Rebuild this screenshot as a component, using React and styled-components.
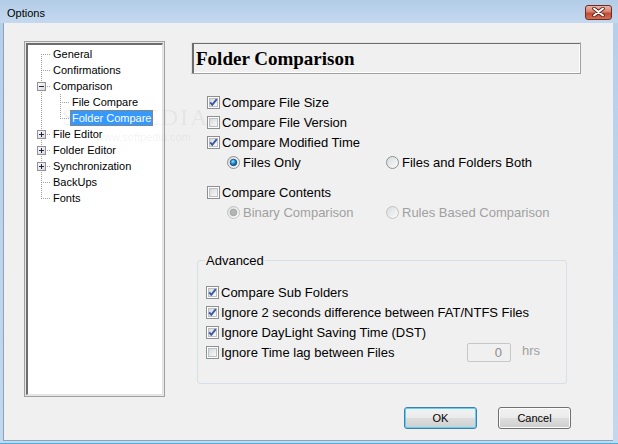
import React from "react";
import styled, { createGlobalStyle } from "styled-components";

// Win7 "Options" dialog
// ------ #f0f0f0 dialog face
// ------ #b9d1ea title bar
// ------ #3399ff selection

const GlobalStyle = createGlobalStyle`
  html, body { margin: 0; padding: 0; background: #f0f0f0; }
  body { font-family: "Liberation Sans", Arial, sans-serif; }
`;

const Window = styled.div`
  position: relative;
  width: 618px;
  height: 444px;
  display: flex;
  flex-direction: column;
  background: linear-gradient(180deg, #b6cfe9 0%, #c3d8ee 100%);
  box-sizing: border-box;
  border-bottom: 1px solid #3fb4de;
  overflow: hidden;
`;

const TitleBar = styled.div`
  height: 23px;
  flex: 0 0 23px;
  display: flex;
  align-items: center;
  justify-content: space-between;
  padding: 0 6px 0 7px;
  background: linear-gradient(180deg, #b3cce7 0%, #bdd4ec 60%, #c4d9ef 100%);
`;

const Title = styled.span`
  font-size: 11px;
  color: #000;
  margin-top: 2px;
`;

const CloseButton = styled.div`
  width: 27px;
  height: 15px;
  margin-top: 1px;
  box-sizing: border-box;
  border: 1px solid #6e2b1f;
  border-radius: 3px;
  background: linear-gradient(180deg, #eab4a8 0%, #d9826f 45%, #c24a33 55%, #d0705a 100%);
  display: flex;
  align-items: center;
  justify-content: center;
`;

const Client = styled.div`
  flex: 1;
  margin: 0 5px 2px 3px;
  background: #f0f0f0;
  border-left: 1px solid #8aa3bf;
  border-bottom: 1px solid #8aa3bf;
  padding: 18px 42px 0 20px;
  display: flex;
  flex-direction: column;
`;

const Main = styled.div`
  display: flex;
  gap: 26px;
`;

const TreeFrame = styled.div`
  flex: 0 0 141px;
  height: 356px;
  box-sizing: border-box;
  border: 1px solid #a0a0a0;
  background: #e8e8e8;
  padding: 1px;
  display: flex;
`;

const TreeView = styled.div`
  flex: 1;
  background: #fff;
  border-top: 2px solid #6d6d6d;
  border-left: 2px solid #6d6d6d;
  border-right: 1px solid #e3e3e3;
  border-bottom: 1px solid #e3e3e3;
  padding: 1px 0 0 4px;
  font-size: 11px;
  color: #000;
`;

const TreeRow = styled.div`
  display: flex;
  height: 16px;
  align-items: center;
`;

const TreeLabel = styled.span`
  height: 16px;
  line-height: 16px;
  padding: 0 2px;
  white-space: nowrap;
  box-sizing: border-box;
  background: ${(p) => (p.$selected ? "#3399ff" : "transparent")};
  color: ${(p) => (p.$selected ? "#fff" : "#000")};
  outline: ${(p) => (p.$selected ? "1px dotted #c4741c" : "none")};
  outline-offset: -1px;
`;

const Pane = styled.div`
  flex: 0 0 390px;
  display: flex;
  flex-direction: column;
`;

const Heading = styled.div`
  margin-top: 1px;
  height: 32px;
  box-sizing: border-box;
  border: 1px solid;
  border-color: #e3e3e3 #a0a0a0 #a0a0a0 #e3e3e3;
  box-shadow: inset 2px 1px 0 #6d6d6d, inset -1px -1px 0 #fff;
  display: flex;
  align-items: center;
  padding: 1px 0 0 4px;
  font-family: "Liberation Serif", "Times New Roman", serif;
  font-weight: bold;
  font-size: 19px;
  color: #000;
`;

const OptionList = styled.div`
  margin-top: 18px;
  display: flex;
  flex-direction: column;
`;

const Row = styled.div`
  height: 20px;
  display: flex;
  align-items: center;
  padding-left: ${(p) => p.$indent || 0}px;
  margin-top: ${(p) => p.$gapTop || 0}px;
  font-size: 13px;
  color: #000;
`;

const Choice = styled.label`
  display: flex;
  align-items: center;
  gap: ${(p) => p.$gap ?? 2}px;
  width: ${(p) => (p.$width ? `${p.$width}px` : "auto")};
  flex: 0 0 auto;
  white-space: nowrap;
  color: ${(p) => (p.$disabled ? "#a0a0a0" : "#000")};
`;

const GroupBox = styled.fieldset`
  margin: 31px 0 0 6px;
  width: 370px;
  box-sizing: border-box;
  border: 1px solid #d5dfe5;
  border-radius: 3px;
  padding: 14px 0 21px 8px;
  min-inline-size: 0;
`;

const Legend = styled.legend`
  font-size: 13px;
  line-height: 15px;
  padding: 0 1px;
  margin-left: -1px;
  color: #000;
`;

const NumberField = styled.div`
  width: 44px;
  height: 19px;
  box-sizing: border-box;
  border: 1px solid #c5c8cb;
  border-radius: 2px;
  background: #f0f0f0;
  font-size: 13px;
  color: #8c8c8c;
  text-align: right;
  padding-right: 8px;
  line-height: 17px;
`;

const Unit = styled.span`
  margin-left: 11px;
  margin-top: -4px;
  font-size: 13px;
  color: #a0a0a0;
`;

const Footer = styled.div`
  margin-top: 10px;
  display: flex;
  justify-content: flex-end;
  gap: 21px;
`;

const Button = styled.button`
  width: 73px;
  height: 22px;
  box-sizing: border-box;
  border: 1px solid ${(p) => (p.$default ? "#3c7fb1" : "#707070")};
  border-radius: 3px;
  background: linear-gradient(180deg, #f2f2f2 0%, #ebebeb 48%, #dddddd 52%, #cfcfcf 100%);
  box-shadow: inset 0 0 0 1px ${(p) => (p.$default ? "#5fd1f5" : "#fcfcfc")};
  font-family: "Liberation Sans", Arial, sans-serif;
  font-size: 11px;
  color: #000;
  padding: 0;
`;

const Watermark = styled.div`
  position: absolute;
  left: 62px;
  top: 104px;
  pointer-events: none;
  color: rgba(150, 150, 150, 0.12);
  font-family: "Liberation Serif", serif;
  font-size: 24px;
  letter-spacing: 2px;
  line-height: 26px;
`;

const WatermarkUrl = styled.div`
  font-family: "Liberation Sans", sans-serif;
  font-size: 11px;
  letter-spacing: 0;
  line-height: 14px;
  margin-left: 34px;
`;

const CloseX = () => (
  <svg width="13" height="10" viewBox="0 0 13 10">
    <path d="M2 1.5 L11 8.5 M11 1.5 L2 8.5" stroke="#5a1e14" strokeWidth="3.6" strokeLinecap="round" />
    <path d="M2 1.5 L11 8.5 M11 1.5 L2 8.5" stroke="#fff" strokeWidth="2" strokeLinecap="round" />
  </svg>
);

const Connector = ({ kind }) => {
  const top = kind === "first" ? 8 : 0;
  const bottom = kind === "last" ? 9 : 16;
  const pipeOnly = kind === "pipe";
  const box = kind === "minus" || kind === "plus";
  return (
    <svg width="19" height="16" viewBox="0 0 19 16" style={{ flex: "0 0 19px" }} shapeRendering="crispEdges">
      <line x1="9.5" y1={top} x2="9.5" y2={bottom} stroke="#a0a0a0" strokeDasharray="1 1" />
      {!pipeOnly && <line x1="11" y1="8.5" x2="19" y2="8.5" stroke="#a0a0a0" strokeDasharray="1 1" />}
      {box && (
        <g>
          <defs>
            <linearGradient id="tbox" x1="0" y1="0" x2="1" y2="1">
              <stop offset="0" stopColor="#ffffff" />
              <stop offset="1" stopColor="#d6d6d6" />
            </linearGradient>
          </defs>
          <rect x="5.5" y="4.5" width="8" height="8" fill="url(#tbox)" stroke="#919191" />
          <line x1="7" y1="8.5" x2="12" y2="8.5" stroke="#1b2a4a" />
          {kind === "plus" && <line x1="9.5" y1="6" x2="9.5" y2="11" stroke="#1b2a4a" />}
        </g>
      )}
    </svg>
  );
};

const CheckBox = ({ checked }) => (
  <svg width="13" height="13" viewBox="0 0 13 13" style={{ flex: "0 0 13px" }}>
    <defs>
      <linearGradient id="cbfill" x1="0" y1="0" x2="1" y2="1">
        <stop offset="0" stopColor="#d4d7db" />
        <stop offset="1" stopColor="#fbfbfb" />
      </linearGradient>
    </defs>
    <rect x="0.5" y="0.5" width="12" height="12" fill="#fff" stroke="#8e8f8f" />
    <rect x="2.5" y="2.5" width="8" height="8" fill="url(#cbfill)" stroke="#bcc0c4" />
    {checked && (
      <path d="M3.2 6.3 L5.3 8.8 L9.8 3.2" fill="none" stroke="#3a57a0" strokeWidth="1.9" />
    )}
  </svg>
);

const Radio = ({ checked, disabled }) => (
  <svg width="13" height="13" viewBox="0 0 13 13" style={{ flex: "0 0 13px" }}>
    <defs>
      <linearGradient id="rbfill" x1="0" y1="0" x2="1" y2="1">
        <stop offset="0" stopColor="#d8dadd" />
        <stop offset="1" stopColor="#fdfdfd" />
      </linearGradient>
      <radialGradient id="rbdot" cx="0.4" cy="0.35" r="0.7">
        <stop offset="0" stopColor="#9fe3ff" />
        <stop offset="0.5" stopColor="#1d8ad0" />
        <stop offset="1" stopColor="#0b3f76" />
      </radialGradient>
    </defs>
    <circle cx="6.5" cy="6.5" r="6" fill="url(#rbfill)" stroke={disabled ? "#c2c2c2" : "#8e8f8f"} />
    {checked && (
      <circle cx="6.5" cy="6.5" r="3.3" fill={disabled ? "#b4b4b4" : "url(#rbdot)"} stroke={disabled ? "#9c9c9c" : "#144f86"} strokeWidth="0.8" />
    )}
  </svg>
);

const tree = [
  { label: "General", cells: ["first"] },
  { label: "Confirmations", cells: ["tee"] },
  { label: "Comparison", cells: ["minus"] },
  { label: "File Compare", cells: ["pipe", "tee"] },
  { label: "Folder Compare", cells: ["pipe", "last"], selected: true },
  { label: "File Editor", cells: ["plus"] },
  { label: "Folder Editor", cells: ["plus"] },
  { label: "Synchronization", cells: ["plus"] },
  { label: "BackUps", cells: ["tee"] },
  { label: "Fonts", cells: ["last"] },
];

export default function App() {
  return (
    <>
      <GlobalStyle />
      <Window>
        <TitleBar>
          <Title>Options</Title>
          <CloseButton>
            <CloseX />
          </CloseButton>
        </TitleBar>
        <Client>
          <Main>
            <TreeFrame>
              <TreeView>
                {tree.map((item) => (
                  <TreeRow key={item.label}>
                    {item.cells.map((c, i) => (
                      <Connector key={i} kind={c} />
                    ))}
                    <TreeLabel $selected={item.selected}>{item.label}</TreeLabel>
                  </TreeRow>
                ))}
              </TreeView>
            </TreeFrame>

            <Pane>
              <Heading>Folder Comparison</Heading>
              <OptionList>
                <Row $indent={16}>
                  <Choice><CheckBox checked />Compare File Size</Choice>
                </Row>
                <Row $indent={16}>
                  <Choice><CheckBox />Compare File Version</Choice>
                </Row>
                <Row $indent={16}>
                  <Choice><CheckBox checked />Compare Modified Time</Choice>
                </Row>
                <Row $indent={36}>
                  <Choice $width={159} $gap={3}><Radio checked />Files Only</Choice>
                  <Choice $gap={3}><Radio />Files and Folders Both</Choice>
                </Row>
                <Row $indent={16} $gapTop={10}>
                  <Choice><CheckBox />Compare Contents</Choice>
                </Row>
                <Row $indent={36}>
                  <Choice $width={159} $gap={3} $disabled><Radio checked disabled />Binary Comparison</Choice>
                  <Choice $gap={3} $disabled><Radio disabled />Rules Based Comparison</Choice>
                </Row>
              </OptionList>

              <GroupBox>
                <Legend>Advanced</Legend>
                <Row>
                  <Choice><CheckBox checked />Compare Sub Folders</Choice>
                </Row>
                <Row>
                  <Choice><CheckBox checked />Ignore 2 seconds difference between FAT/NTFS Files</Choice>
                </Row>
                <Row>
                  <Choice><CheckBox checked />Ignore DayLight Saving Time (DST)</Choice>
                </Row>
                <Row>
                  <Choice $width={261}><CheckBox />Ignore Time lag between Files</Choice>
                  <NumberField>0</NumberField>
                  <Unit>hrs</Unit>
                </Row>
              </GroupBox>
            </Pane>
          </Main>

          <Footer>
            <Button $default>OK</Button>
            <Button>Cancel</Button>
          </Footer>
        </Client>
        <Watermark>
          SOFTPEDIA
          <WatermarkUrl>www.softpedia.com</WatermarkUrl>
        </Watermark>
      </Window>
    </>
  );
}
